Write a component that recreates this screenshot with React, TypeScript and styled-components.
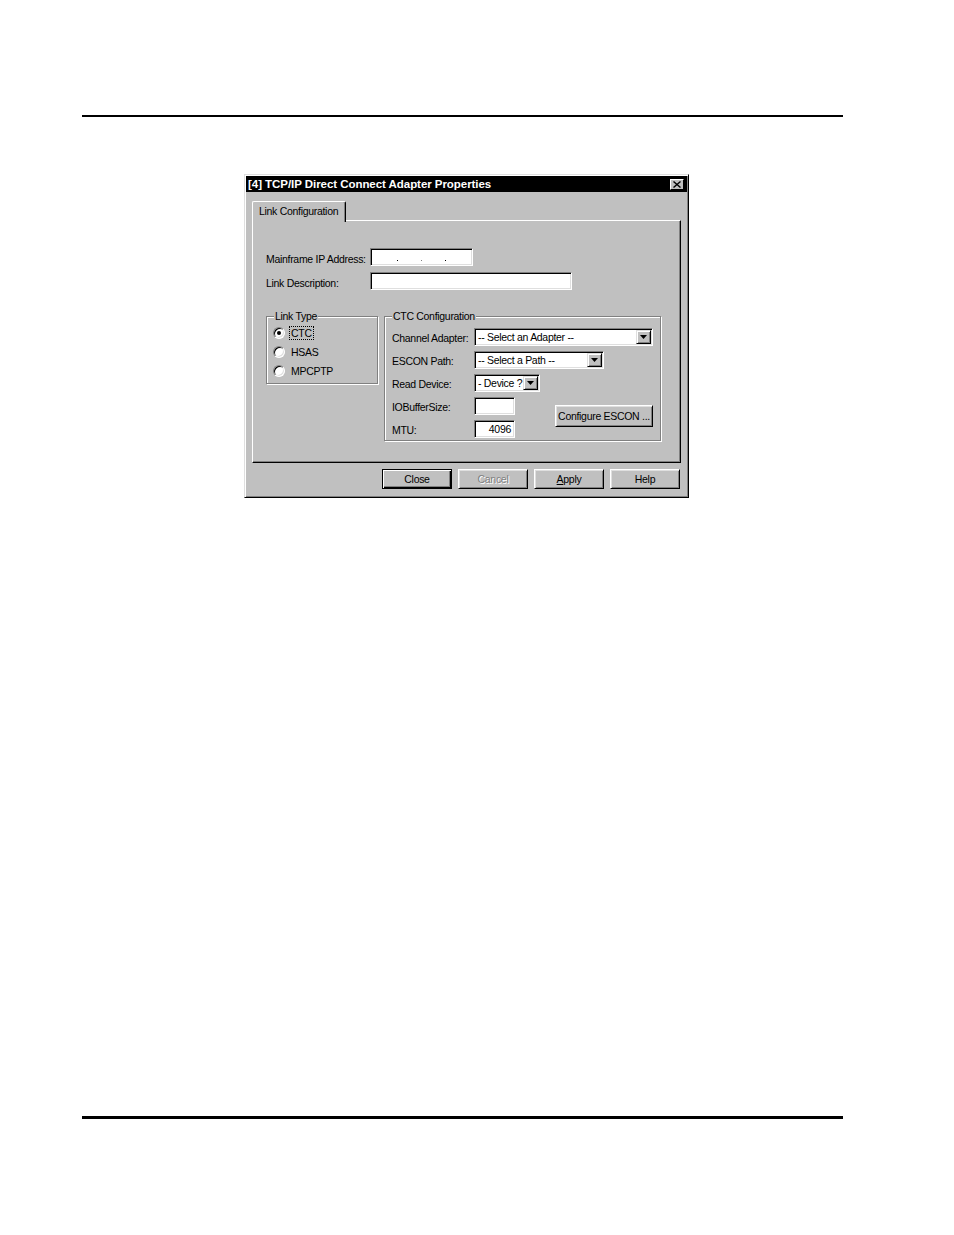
import React from "react";
import styled, { createGlobalStyle } from "styled-components";

const GlobalStyle = createGlobalStyle`
  html, body { margin: 0; padding: 0; background: #fff; }
  body { font-family: "Liberation Sans", Arial, sans-serif; }
`;

const Page = styled.div`
  width: 954px;
  height: 1235px;
  padding-top: 115px;
  box-sizing: border-box;
  display: flex;
  flex-direction: column;
`;

const Rule = styled.div<{ $thick: number; $top: number }>`
  margin: ${({ $top }) => $top}px 0 0 82px;
  width: 761px;
  height: ${({ $thick }) => $thick}px;
  background: #000;
`;

const Dialog = styled.div`
  margin: 57px 0 0 244px;
  width: 445px;
  height: 324px;
  box-sizing: border-box;
  background: #c0c0c0;
  border: 1px solid;
  border-color: #dfdfdf #000 #000 #dfdfdf;
  box-shadow: inset 1px 1px 0 #fff, inset -1px -1px 0 #808080;
  padding: 1px;
  display: flex;
  flex-direction: column;
  font-size: 10.5px;
  letter-spacing: -0.3px;
  color: #000;
`;

const TitleBar = styled.div`
  height: 16px;
  flex: none;
  background: #000;
  color: #fff;
  font-weight: bold;
  font-size: 11.5px;
  letter-spacing: -0.05px;
  display: flex;
  align-items: center;
  justify-content: space-between;
  padding: 0 3px 0 2px;
`;

const CloseBox = styled.div`
  width: 14px;
  height: 11px;
  box-sizing: border-box;
  background: #c0c0c0;
  border: 1px solid;
  border-color: #fff #000 #000 #fff;
  display: flex;
  align-items: center;
  justify-content: center;
`;

const Body = styled.div`
  flex: 1;
  display: flex;
  flex-direction: column;
  padding: 9px 6px 7px 6px;
`;

const TabStrip = styled.div`
  display: flex;
  height: 19px;
`;

const Tab = styled.div`
  position: relative;
  z-index: 1;
  width: 94px;
  height: 21px;
  box-sizing: border-box;
  background: #c0c0c0;
  border-top: 1px solid #fff;
  border-left: 1px solid #fff;
  border-right: 1px solid #000;
  box-shadow: inset -1px 0 0 #808080;
  border-radius: 2px 2px 0 0;
  padding: 3px 0 0 6px;
`;

const Panel = styled.div`
  height: 243px;
  box-sizing: border-box;
  border: 1px solid;
  border-color: #fff #000 #000 #fff;
  box-shadow: inset -1px -1px 0 #808080;
  padding: 27px 12px 0 13px;
  display: flex;
  flex-direction: column;
`;

const FormRow = styled.div<{ $gap?: number }>`
  display: grid;
  grid-template-columns: 104px auto;
  align-items: center;
  height: 18px;
  margin-top: ${({ $gap }) => $gap ?? 0}px;
`;

const RowLabel = styled.span`
  padding-top: 3px;
`;

const Field = styled.div<{ $w: number; $right?: boolean }>`
  width: ${({ $w }) => $w}px;
  height: 18px;
  box-sizing: border-box;
  background: #fff;
  border: 1px solid;
  border-color: #808080 #fff #fff #808080;
  box-shadow: inset 1px 1px 0 #000, inset -1px -1px 0 #dfdfdf;
  display: flex;
  align-items: center;
  justify-content: ${({ $right }) => ($right ? "flex-end" : "space-evenly")};
  padding: 0 3px;
`;

const Dot = styled.span<{ $dim?: boolean }>`
  width: 1px;
  height: 1px;
  margin-top: 6px;
  background: ${({ $dim }) => ($dim ? "#808080" : "#000")};
`;

const Groups = styled.div`
  display: flex;
  gap: 6px;
  margin-top: 26px;
  align-items: flex-start;
`;

const Group = styled.div<{ $w: number; $h: number }>`
  position: relative;
  width: ${({ $w }) => $w}px;
  height: ${({ $h }) => $h}px;
  box-sizing: border-box;
  border: 1px solid #808080;
  box-shadow: 1px 1px 0 #fff, inset 1px 1px 0 #fff;
`;

const Legend = styled.span`
  position: absolute;
  top: -7px;
  left: 7px;
  padding: 0 1px;
  line-height: 13px;
  background: #c0c0c0;
`;

const RadioList = styled.div`
  display: flex;
  flex-direction: column;
  padding: 6px 0 0 6px;
`;

const RadioRow = styled.div`
  height: 19px;
  display: flex;
  align-items: center;
  gap: 5px;
`;

const Radio = styled.span<{ $on?: boolean }>`
  width: 12px;
  height: 12px;
  box-sizing: border-box;
  border-radius: 50%;
  background: #fff;
  border: 1px solid;
  border-color: #808080 #fff #fff #808080;
  box-shadow: inset 1px 1px 0 #000, inset -1px -1px 0 #dfdfdf;
  display: flex;
  align-items: center;
  justify-content: center;
  &::after {
    content: "";
    width: 4px;
    height: 4px;
    border-radius: 50%;
    background: ${({ $on }) => ($on ? "#000" : "transparent")};
  }
`;

const RadioLabel = styled.span<{ $focus?: boolean }>`
  line-height: 12px;
  padding: 0 1px;
  outline: ${({ $focus }) => ($focus ? "1px dotted #000" : "none")};
`;

const CtcGrid = styled.div`
  display: grid;
  grid-template-columns: 82px 1fr;
  grid-template-rows: repeat(5, 18px);
  row-gap: 5px;
  align-items: center;
  padding: 11px 7px 0 7px;
`;

const CellLabel = styled.span<{ $row: number }>`
  grid-column: 1;
  grid-row: ${({ $row }) => $row};
  padding-top: 1px;
`;

const Combo = styled(Field)<{ $row: number }>`
  grid-column: 2;
  grid-row: ${({ $row }) => $row};
  justify-content: space-between;
  padding: 0 1px 0 3px;
  justify-self: start;
`;

const ComboArrow = styled.span`
  width: 15px;
  height: 14px;
  box-sizing: border-box;
  background: #c0c0c0;
  border: 1px solid;
  border-color: #dfdfdf #000 #000 #dfdfdf;
  box-shadow: inset 1px 1px 0 #fff, inset -1px -1px 0 #808080;
  display: flex;
  align-items: center;
  justify-content: center;
`;

const SmallField = styled(Field)<{ $row: number }>`
  grid-column: 2;
  grid-row: ${({ $row }) => $row};
  justify-self: start;
  padding: 0 3px;
`;

const WinButton = styled.button<{ $w: number; $h: number; $default?: boolean }>`
  width: ${({ $w }) => $w}px;
  height: ${({ $h }) => $h}px;
  box-sizing: border-box;
  padding: 0;
  font: inherit;
  letter-spacing: inherit;
  color: #000;
  background: #c0c0c0;
  border: 1px solid;
  border-color: ${({ $default }) => ($default ? "#000" : "#fff #000 #000 #fff")};
  box-shadow: ${({ $default }) =>
    $default
      ? "inset 1px 1px 0 #fff, inset -1px -1px 0 #000, inset -2px -2px 0 #808080"
      : "inset 1px 1px 0 #dfdfdf, inset -1px -1px 0 #808080"};
  &:disabled {
    color: #808080;
    text-shadow: 1px 1px 0 #fff;
  }
`;

const ConfigureButton = styled(WinButton)`
  grid-column: 2;
  grid-row: 4 / span 2;
  justify-self: end;
  align-self: center;
  margin-top: -4px;
`;

const ButtonRow = styled.div`
  display: flex;
  justify-content: flex-end;
  gap: 6px;
  margin-top: 6px;
  padding-right: 1px;
`;

const Arrow = () => (
  <svg width="7" height="4" viewBox="0 0 7 4">
    <path d="M0 0h7L3.5 4z" fill="#000" />
  </svg>
);

const Select = ({ w, text, row }: { w: number; text: string; row: number }) => (
  <Combo $w={w} $row={row}>
    <span>{text}</span>
    <ComboArrow>
      <Arrow />
    </ComboArrow>
  </Combo>
);

const App = () => {
  return (
    <Page>
      <GlobalStyle />
      <Rule $thick={2} $top={0} />
      <Dialog>
        <TitleBar>
          <span>[4] TCP/IP Direct Connect Adapter Properties</span>
          <CloseBox>
            <svg width="8" height="7" viewBox="0 0 8 7">
              <path d="M0.5 0.5l7 6M7.5 0.5l-7 6" stroke="#000" strokeWidth="1.4" />
            </svg>
          </CloseBox>
        </TitleBar>
        <Body>
          <TabStrip>
            <Tab>Link Configuration</Tab>
          </TabStrip>
          <Panel>
            <FormRow>
              <RowLabel>Mainframe IP Address:</RowLabel>
              <Field $w={103}>
                <Dot />
                <Dot $dim />
                <Dot />
              </Field>
            </FormRow>
            <FormRow $gap={6}>
              <RowLabel>Link Description:</RowLabel>
              <Field $w={202} />
            </FormRow>
            <Groups>
              <Group $w={112} $h={68}>
                <Legend>Link Type</Legend>
                <RadioList>
                  <RadioRow>
                    <Radio $on />
                    <RadioLabel $focus>CTC</RadioLabel>
                  </RadioRow>
                  <RadioRow>
                    <Radio />
                    <RadioLabel>HSAS</RadioLabel>
                  </RadioRow>
                  <RadioRow>
                    <Radio />
                    <RadioLabel>MPCPTP</RadioLabel>
                  </RadioRow>
                </RadioList>
              </Group>
              <Group $w={277} $h={125}>
                <Legend>CTC Configuration</Legend>
                <CtcGrid>
                  <CellLabel $row={1}>Channel Adapter:</CellLabel>
                  <Select row={1} w={179} text="-- Select an Adapter --" />
                  <CellLabel $row={2}>ESCON Path:</CellLabel>
                  <Select row={2} w={130} text="-- Select a Path --" />
                  <CellLabel $row={3}>Read Device:</CellLabel>
                  <Select row={3} w={66} text="- Device ?" />
                  <CellLabel $row={4}>IOBufferSize:</CellLabel>
                  <SmallField $row={4} $w={41} />
                  <CellLabel $row={5}>MTU:</CellLabel>
                  <SmallField $row={5} $w={41} $right>
                    4096
                  </SmallField>
                  <ConfigureButton $w={98} $h={22}>
                    Configure ESCON ...
                  </ConfigureButton>
                </CtcGrid>
              </Group>
            </Groups>
          </Panel>
          <ButtonRow>
            <WinButton $w={70} $h={20} $default>
              Close
            </WinButton>
            <WinButton $w={70} $h={20} disabled>
              Cancel
            </WinButton>
            <WinButton $w={70} $h={20}>
              <u>A</u>pply
            </WinButton>
            <WinButton $w={70} $h={20}>
              Help
            </WinButton>
          </ButtonRow>
        </Body>
      </Dialog>
      <Rule $thick={3} $top={618} />
    </Page>
  );
};

export default App;
